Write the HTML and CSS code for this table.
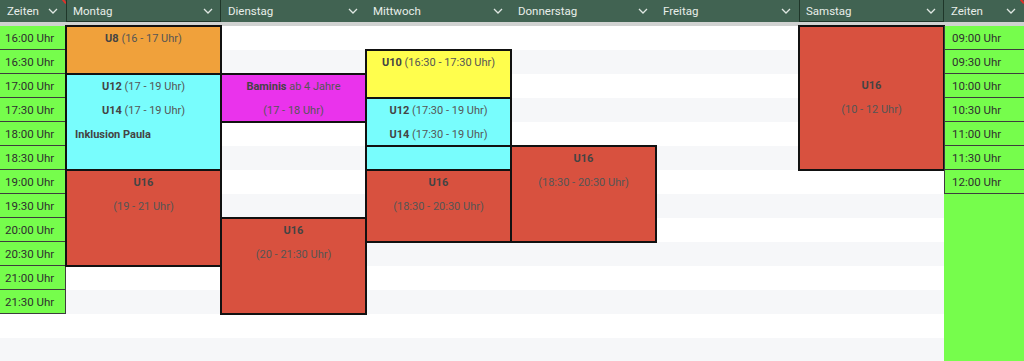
FILE: index.html
```html
<!DOCTYPE html>
<html lang="de">
<head>
<meta charset="utf-8">
<title>Trainingsplan</title>
<link rel="stylesheet" href="styles.css">
</head>
<body>
<div class="planner">
  <div class="cols head">
    <div class="hcell mark">Zeiten <svg class="chev" viewBox="0 0 10 6"><polyline points="1,1 5,5 9,1"/></svg></div>
    <div class="hcell sel">Montag <svg class="chev" viewBox="0 0 10 6"><polyline points="1,1 5,5 9,1"/></svg></div>
    <div class="hcell">Dienstag <svg class="chev" viewBox="0 0 10 6"><polyline points="1,1 5,5 9,1"/></svg></div>
    <div class="hcell">Mittwoch <svg class="chev" viewBox="0 0 10 6"><polyline points="1,1 5,5 9,1"/></svg></div>
    <div class="hcell">Donnerstag <svg class="chev" viewBox="0 0 10 6"><polyline points="1,1 5,5 9,1"/></svg></div>
    <div class="hcell">Freitag <svg class="chev" viewBox="0 0 10 6"><polyline points="1,1 5,5 9,1"/></svg></div>
    <div class="hcell sel">Samstag <svg class="chev" viewBox="0 0 10 6"><polyline points="1,1 5,5 9,1"/></svg></div>
    <div class="hcell mark">Zeiten <svg class="chev" viewBox="0 0 10 6"><polyline points="1,1 5,5 9,1"/></svg></div>
  </div>
  <div class="cols body">
    <div class="times left">
      <div class="time">16:00 Uhr</div>
      <div class="time">16:30 Uhr</div>
      <div class="time">17:00 Uhr</div>
      <div class="time">17:30 Uhr</div>
      <div class="time">18:00 Uhr</div>
      <div class="time">18:30 Uhr</div>
      <div class="time">19:00 Uhr</div>
      <div class="time">19:30 Uhr</div>
      <div class="time">20:00 Uhr</div>
      <div class="time">20:30 Uhr</div>
      <div class="time">21:00 Uhr</div>
      <div class="time">21:30 Uhr</div>
    </div>

    <div class="ev mo orange" style="grid-row: 1 / 3"><div><b>U8</b> (16 - 17 Uhr)</div></div>
    <div class="ev mo cyan" style="grid-row: 3 / 7"><div><b>U12</b> (17 - 19 Uhr)</div><div><b>U14</b> (17 - 19 Uhr)</div><div class="note"><b>Inklusion Paula</b></div></div>
    <div class="ev mo red" style="grid-row: 7 / 11"><div><b>U16</b></div><div>(19 - 21 Uhr)</div></div>

    <div class="ev di magenta" style="grid-row: 3 / 5"><div><b>Baminis</b> ab 4 Jahre</div><div>(17 - 18 Uhr)</div></div>
    <div class="ev di red" style="grid-row: 9 / 13"><div><b>U16</b></div><div>(20 - 21:30 Uhr)</div></div>

    <div class="ev mi yellow" style="grid-row: 2 / 4"><div><b>U10</b> (16:30 - 17:30 Uhr)</div></div>
    <div class="ev mi cyan" style="grid-row: 4 / 6"><div><b>U12</b> (17:30 - 19 Uhr)</div><div><b>U14</b> (17:30 - 19 Uhr)</div></div>
    <div class="ev mi cyan" style="grid-row: 6 / 7"></div>
    <div class="ev mi red" style="grid-row: 7 / 10"><div><b>U16</b></div><div>(18:30 - 20:30 Uhr)</div></div>

    <div class="ev do red" style="grid-row: 6 / 10"><div><b>U16</b></div><div>(18:30 - 20:30 Uhr)</div></div>

    <div class="ev sa red centered" style="grid-row: 1 / 7"><div><b>U16</b></div><div>(10 - 12 Uhr)</div></div>

    <div class="times right">
      <div class="time">09:00 Uhr</div>
      <div class="time">09:30 Uhr</div>
      <div class="time">10:00 Uhr</div>
      <div class="time">10:30 Uhr</div>
      <div class="time">11:00 Uhr</div>
      <div class="time">11:30 Uhr</div>
      <div class="time">12:00 Uhr</div>
    </div>
  </div>
</div>
</body>
</html>
```

FILE: styles.css
```css
* { box-sizing: border-box; }

body {
  margin: 0;
  background: #ffffff;
  font-family: Roboto, "Liberation Sans", sans-serif;
  font-size: 11px;
  color: #444;
}

.planner {
  width: 1024px;
  height: 361px;
  overflow: hidden;
}

.cols {
  display: grid;
  grid-template-columns: 66px 155px 145px 145px 145px 143px 145px 80px;
}

.head {
  height: 26px;
  background: #416352;
  border-bottom: 4px solid #d0d2d1;
}

.hcell {
  position: relative;
  display: flex;
  align-items: center;
  justify-content: space-between;
  padding: 0 8px 1px 7px;
  color: #e8eee9;
  font-size: 11.5px;
}

.hcell.sel {
  box-shadow: inset 1px 0 #1f3629, inset -1px 0 #1f3629, inset 0 -1px #1f3629;
}

.hcell.mark::after {
  content: "";
  position: absolute;
  top: -2px;
  right: 1px;
  width: 2px;
  height: 6px;
  background: #e0302a;
  transform: rotate(-40deg);
}

.chev {
  width: 10px;
  height: 6px;
  flex: none;
}

.chev polyline {
  fill: none;
  stroke: #dfe7e2;
  stroke-width: 1.3;
}

.body {
  grid-template-rows: repeat(14, 24px);
  height: 335px;
  background: repeating-linear-gradient(to bottom, #ffffff 0 24px, #f6f7f9 24px 48px);
}

.times {
  display: flex;
  flex-direction: column;
}

.times.left {
  grid-column: 1;
  grid-row: 1 / 13;
}

.times.right {
  grid-column: 8;
  grid-row: 1 / -1;
  background: #76fd4c;
}

.time {
  height: 24px;
  flex: none;
  display: flex;
  align-items: center;
  background: #76fd4c;
  border-bottom: 1px solid #3d3d3d;
  color: #2f2f2f;
  font-size: 11.5px;
  padding: 1px 0 0 5px;
}

.left .time { border-right: 1px solid #3d3d3d; }
.right .time { border-left: 1px solid #3d3d3d; padding-left: 7px; }

.ev {
  display: flex;
  flex-direction: column;
  border: 1px solid #111;
  box-shadow: 0 0 0 1px #111;
  text-align: center;
  line-height: 24px;
  color: #555;
  font-size: 11px;
}

.ev > div { height: 24px; flex: none; }
.ev b { color: #444; font-weight: 700; }
.ev .note { text-align: left; padding-left: 8px; }
.ev.centered { justify-content: center; }

.mo { grid-column: 2; }
.di { grid-column: 3; }
.mi { grid-column: 4; }
.do { grid-column: 5; }
.sa { grid-column: 7; }

.orange { background: #f0a13b; }
.cyan { background: #78fdfd; }
.red { background: #d8513f; }
.magenta { background: #ea33ec; }
.yellow { background: #fffe4d; }
```
